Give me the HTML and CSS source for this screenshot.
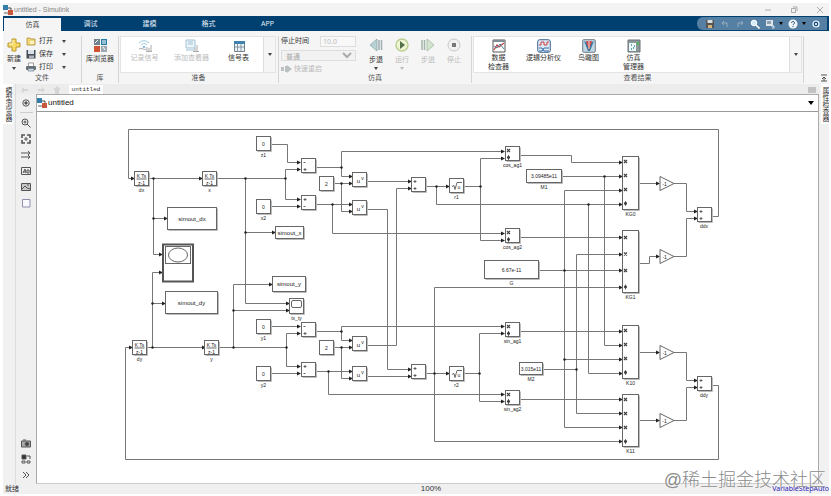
FILE: index.html
```html
<!DOCTYPE html>
<html lang="zh-CN">
<head>
<meta charset="utf-8">
<title>untitled - Simulink</title>
<link rel="stylesheet" href="styles.css">
</head>
<body>
<svg class="defs" aria-hidden="true">
  <symbol id="model" viewBox="0 0 10 10"><path d="M5 3h3v4" fill="none" stroke="#444"/><rect x="0" y="0" width="5" height="5" fill="#347fa9"/><rect x="5" y="5" width="5" height="5" fill="#c9573b"/><path d="M1 8h4" stroke="#666"/></symbol>
</svg>
<div class="app">
  <header class="titlebar">
    <svg class="ic10"><use href="#model"/></svg>
    <span class="title">untitled - Simulink</span>
    <div class="winbtns">
      <button aria-label="最小化"><svg viewBox="0 0 8 8"><path d="M1 4h6"/></svg></button>
      <button aria-label="还原"><svg viewBox="0 0 8 8"><path d="M1.500 2.500h4v4h-4zM3 1h4v4"/></svg></button>
      <button aria-label="关闭"><svg viewBox="0 0 8 8"><path d="M1 1l6 6M7 1l-6 6"/></svg></button>
    </div>
  </header>

  <nav class="tabs">
    <button class="tab active">仿真</button>
    <button class="tab">调试</button>
    <button class="tab">建模</button>
    <button class="tab">格式</button>
    <button class="tab">APP</button>
    <div class="quick">
      <button aria-label="保存"><svg viewBox="0 0 10 10"><path d="M1 1h8v8H1z" fill="#555"/><path d="M2.500 1h5v3h-5z" fill="#d8dde0"/><path d="M3 6h4v3H3z" fill="#d4b47c"/></svg></button>
      <button aria-label="撤销"><svg viewBox="0 0 10 10"><path d="M4 2L2 4l2 2M2 4h5v4" fill="none" stroke="#94adc1"/></svg></button>
      <button aria-label="重做"><svg viewBox="0 0 10 10"><path d="M6 2l2 2-2 2M8 4H3v4" fill="none" stroke="#94adc1"/></svg></button>
      <button aria-label="搜索"><svg viewBox="0 0 10 10"><circle cx="4" cy="4" r="2.800" fill="#d5ecf8" stroke="#fff"/><path d="M6 6l3.500 3.500" stroke="#fff" stroke-width="1.600"/></svg></button>
      <button class="drop" aria-label="收藏"><svg viewBox="0 0 10 10"><path d="M1 1h7v6H1z" fill="#dde3e8"/><path d="M3 2v3M5 2v3" stroke="#46607a"/><path d="M6 7h3v2H7" fill="none" stroke="#dde3e8"/></svg><i></i></button>
      <button class="drop" aria-label="帮助"><svg viewBox="0 0 10 10"><circle cx="5" cy="5" r="4.500" fill="#f2f6f9"/><path d="M3.500 4c0-2 3-2 3 0 0 1-1.500 1-1.500 2M5 7v1" fill="none" stroke="#164a78"/></svg><i></i></button>
      <button aria-label="选项"><svg viewBox="0 0 10 10"><circle cx="5" cy="5" r="3" fill="#1b578c" stroke="#fff" stroke-width="1.200"/><circle cx="5" cy="5" r="1" fill="#fff"/></svg></button>
    </div>
  </nav>

  <section class="ribbon">
    <div class="group g-file">
      <div class="body">
        <button class="big"><svg viewBox="0 0 16 16"><path d="M6 2h4v4h4v4h-4v4H6v-4H2V6h4z" fill="#f8d964" stroke="#b9962e"/><path d="M7 3v4H3" fill="none" stroke="#fff6c8"/></svg><span>新建</span><i></i></button>
        <div class="rows">
          <button><svg viewBox="0 0 10 10"><path d="M1 9V2h3l1 1h4v6z" fill="#f5d675" stroke="#ac8f3f" stroke-width=".8"/><path d="M4 5h4v3H4z" fill="#fff4c3"/></svg><span>打开</span><i></i></button>
          <button><svg viewBox="0 0 10 10"><path d="M.5 1h9v8.500h-9z" fill="#454d56"/><path d="M2 1h6v4H2z" fill="#d9e2e9"/><path d="M3 6.500h5V9H3z" fill="#aeb5bc"/></svg><span>保存</span><i></i></button>
          <button><svg viewBox="0 0 10 10"><path d="M2.500 4V1h5v3" fill="#fff" stroke="#777" stroke-width=".7"/><rect y="4" width="10" height="4" rx="1" fill="#66717c"/><path d="M2 6.500h6V9H2z" fill="#c4def0" stroke="#666" stroke-width=".6"/></svg><span>打印</span><i></i></button>
        </div>
      </div>
      <h2>文件</h2>
    </div>
    <div class="group g-lib">
      <div class="body">
        <button class="big"><svg viewBox="0 0 14 14"><rect x="1" y="1" width="6" height="6" fill="#70818c"/><rect x="8" y="1" width="6" height="6" fill="#277ca6"/><rect x="1" y="8" width="6" height="6" fill="#cf5334"/><rect x="8" y="8" width="6" height="6" fill="#9aa9b4"/><path d="M2 5l3-3M9 3h4M9 5h4M10 9l2 3" stroke="#fff"/></svg><span>库浏览器</span></button>
      </div>
      <h2>库</h2>
    </div>
    <div class="group g-prep">
      <div class="body gallery">
        <button class="big" disabled><svg viewBox="0 0 14 14"><path d="M1 4c3-3 7-3 10 0M3 6c2-2 4-2 6 0" fill="none" stroke="#9ec9df"/><circle cx="6" cy="8" r="1.300" fill="#8fc1db"/><path d="M1 10c3-2 5 2 7 0M9 12V8M11 12V9M13 12V6M8 12.500h6" fill="none" stroke="#aaa"/></svg><span>记录信号</span></button>
        <button class="big" disabled><svg viewBox="0 0 14 14"><path d="M1 1h9v8H1z" fill="#eef6fa" stroke="#9ec1d6"/><path d="M3 3h5M3 5h5M1 11h8" stroke="#9ec1d6"/><path d="M10 12V9M12 12V6M8 12.500h6" stroke="#aaa"/></svg><span>添加查看器</span></button>
        <button class="big"><svg viewBox="0 0 14 14"><path d="M2.500 2.500h10v10h-10z" fill="#eaf3f8" stroke="#73838e"/><path d="M2 2h11v3H2z" fill="#4282ae"/><path d="M2 8h10M5.500 5v7M9 5v7" stroke="#73838e" stroke-width=".8"/></svg><span>信号表</span></button>
        <button class="more" aria-label="更多准备工具"><i></i></button>
      </div>
      <h2>准备</h2>
    </div>
    <div class="group g-sim">
      <div class="body">
        <div class="fields">
          <div class="field"><label for="stop">停止时间</label><input id="stop" value="10.0" disabled></div>
          <select aria-label="仿真模式" disabled><option>普通</option></select>
          <button class="restart" disabled><svg viewBox="0 0 12 10"><path d="M0 3h3v4H0zM4 2h2v6H4zM6 1l5 4-5 4z" fill="#bbc0c3"/></svg><span>快速重启</span></button>
        </div>
        <button class="big"><svg viewBox="0 0 14 14"><path d="M8 1v12L1 7z" fill="#b8d1d4" stroke="#8ea9ac" stroke-width=".8"/><path d="M10 2v10M12.500 2v10" stroke="#9eaeb2" stroke-width="1.500"/></svg><span>步退</span><i></i></button>
        <button class="big" disabled><svg viewBox="0 0 14 14"><circle cx="7" cy="7" r="6" fill="#eef5d2" stroke="#b9cd91" stroke-width="1.400"/><path d="M5 3l5 4-5 4z" fill="#55704d"/></svg><span>运行</span><i></i></button>
        <button class="big" disabled><svg viewBox="0 0 14 14"><path d="M1 2v10M3.500 2v10" stroke="#a3b4aa" stroke-width="1.500"/><path d="M6 1v12l7-6z" fill="#d4e6cf" stroke="#a1b99d" stroke-width=".8"/></svg><span>步进</span></button>
        <button class="big" disabled><svg viewBox="0 0 14 14"><circle cx="7" cy="7" r="6" fill="#f1f1f1" stroke="#c8c8c8"/><path d="M5 5h4v4H5z" fill="#777"/></svg><span>停止</span></button>
      </div>
      <h2>仿真</h2>
    </div>
    <div class="group g-view">
      <div class="body gallery">
        <button class="big"><svg viewBox="0 0 14 14"><path d="M1 1h12v12H1z" fill="#fff" stroke="#555"/><path d="M1 2h12" stroke="#7e8c95" stroke-width="2"/><path d="M2 11l3-5 2 2 5-4" fill="none" stroke="#c03c48" stroke-width="1.200"/><path d="M2 7l3 2 3-4 4 5" fill="none" stroke="#528198"/></svg><span>数据<br>检查器</span></button>
        <button class="big"><svg viewBox="0 0 14 14"><rect x=".7" y=".7" width="12.600" height="12.600" rx="2" fill="#dce9f4" stroke="#44668d"/><path d="M2 6h2V3h3v3h3V3h2" fill="none" stroke="#cf3d43"/><path d="M2 9h3l2 3h5M2 12h3l2-3h5" fill="none" stroke="#386eab"/></svg><span>逻辑分析仪</span></button>
        <button class="big"><svg viewBox="0 0 14 14"><rect x=".7" y=".7" width="12.600" height="12.600" rx="1" fill="#c2d7e4" stroke="#6e7b85"/><path d="M2 2l4 10h2l4-10-4 2v5L6 4z" fill="#3e759f"/><path d="M4 2h6L7 11z" fill="#d74d4c"/><path d="M7 2v8" stroke="#f5d2cc"/></svg><span>鸟瞰图</span></button>
        <button class="big"><svg viewBox="0 0 14 14"><path d="M1 1h12v12H1z" fill="#8b9996" stroke="#69727a"/><path d="M2 4h7v8H2z" fill="#edf9f9"/><path d="M4 6h1M7 7h1M4 10h1M6 9h1" stroke="#338c9b" stroke-width="1.500"/><path d="M11 3v3" stroke="#52b35a" stroke-width="2"/></svg><span>仿真<br>管理器</span></button>
        <button class="more" aria-label="更多结果工具"><i></i></button>
      </div>
      <h2>查看结果</h2>
    </div>
    <button class="pin" aria-label="折叠工具条"><svg viewBox="0 0 8 8"><path d="M1 1h6M4 3v4M2 5l2-2 2 2M1 7h6" fill="none" stroke="#555"/></svg></button>
  </section>

  <main class="work">
    <aside class="side left"><button>模型浏览器</button></aside>
    <div class="editor">
      <div class="doctabs">
        <button aria-label="后退"><svg viewBox="0 0 8 8"><path d="M0 4l3-3v2h4v2H3v2z"/></svg></button>
        <button aria-label="前进"><svg viewBox="0 0 8 8"><path d="M8 4L5 1v2H1v2h4v2z"/></svg></button>
        <button aria-label="向上"><svg viewBox="0 0 8 8"><path d="M4 0l4 4H6v4H2V4H0z"/></svg></button>
        <button class="doc">untitled</button>
        <button class="kbd" aria-label="布局"><svg viewBox="0 0 8 5"><path d="M0 .5h8M0 2.500h8M0 4.500h8" stroke="#999"/></svg></button>
      </div>
      <div class="lower">
        <div class="palette">
          <button aria-label="隐藏浏览器"><svg viewBox="0 0 10 10"><circle cx="5" cy="5" r="3.200"/><circle cx="5" cy="5" r="1.200" fill="#444"/></svg></button>
          <hr>
          <button aria-label="缩放"><svg viewBox="0 0 10 10"><circle cx="4" cy="4" r="3"/><path d="M6 6l3.500 3.500M2.500 4h3M4 2.500v3"/></svg></button>
          <button aria-label="适应窗口"><svg viewBox="0 0 10 10"><path d="M1 4V1h3M6 1h3v3M9 6v3H6M4 9H1V6" stroke-width="1.600"/><path d="M4 4h2v2H4z"/></svg></button>
          <button aria-label="信号线"><svg viewBox="0 0 10 10"><path d="M0 3h9M7 1l2 2-2 2M0 7h9M7 5l2 2-2 2"/></svg></button>
          <button aria-label="注释"><svg viewBox="0 0 10 10"><path d="M.5 1.500h9v7h-9zM2 7l2-4 1 4M2.500 6H5M6 4h2v3H6z"/></svg></button>
          <button aria-label="图像"><svg viewBox="0 0 10 10"><path d="M.5 1.500h9v7h-9z" fill="#c9c9c9"/><path d="M1 7l3-3 2 2 3 1M6 3h2"/></svg></button>
          <button aria-label="区域"><svg viewBox="0 0 10 10"><path d="M1.500 1.500h7.500v7.500h-7.500z" fill="#f8f8ff" stroke="#8f8fac"/></svg></button>
          <span class="fill"></span>
          <button aria-label="截图"><svg viewBox="0 0 10 10"><path d="M.5 3h9v6h-9zM2 2h3" fill="#aaa"/><circle cx="6" cy="6" r="1.800" fill="#444"/></svg></button>
          <button aria-label="模型数据"><svg viewBox="0 0 10 10"><path d="M1 1h4v4H1z" fill="#333"/><path d="M6 2h3v3M1 7h3v2H1zM6 7h3v2H6z"/></svg></button>
          <button aria-label="更多"><svg viewBox="0 0 10 10"><path d="M2 2l3 3-3 3M5 2l3 3-3 3"/></svg></button>
        </div>
        <div class="page">
          <div class="path">
            <svg class="ic10"><use href="#model"/></svg><span>untitled</span>
            <button aria-label="路径历史"><i></i></button>
          </div>
          <div class="canvas"><svg id="diagram" class="diagram" width="780" height="372" viewBox="37 112 780 372" role="img" aria-label="untitled 模型"></svg></div>
        </div>
      </div>
    </div>
    <aside class="side right"><button>属性检查器</button></aside>
  </main>

  <footer class="status"><span>就绪</span><span class="zoom">100%</span><a href="#solver">VariableStepAuto</a></footer>
  <div class="mark">@稀土掘金技术社区</div>
</div>
<script src="diagram.js"></script>
</body>
</html>
```

FILE: styles.css
```css
* { box-sizing: border-box; }
body { margin: 0; background: #fff; color: #333; font: 7px/10px "Noto Sans", "Noto Sans CJK SC", sans-serif; }
button { margin: 0; padding: 0; border: 0; background: none; color: inherit; font: inherit; }
h2 { margin: 0; font: inherit; text-align: center; color: #555; }
svg { display: block; }
i { display: block; width: 0; height: 0; border: 2px solid transparent; border-top: 3px solid #444; border-bottom: 0; }
.defs { position: absolute; width: 0; height: 0; }
.ic10 { width: 10px; height: 10px; }
.app { position: relative; display: flex; flex-direction: column; height: 100vh; padding: 3px 2px 2px 3px; }

.titlebar { display: flex; align-items: center; gap: 1px; height: 13px; background: #f3f3f3; color: #888; font-family: "Liberation Sans", sans-serif; }
.winbtns { display: flex; gap: 18px; margin-left: auto; padding-right: 5px; }
.winbtns svg { width: 8px; height: 8px; fill: none; stroke: #999; stroke-width: .8; }

.tabs { display: flex; height: 15px; background: #004071; color: #e4edf5; }
.tab { width: 59px; padding-top: 1px; }
.tab.active { width: 57px; margin: 2px 0 0 1px; padding: 0; background: #f5f5f5; color: #444; }
.quick { display: flex; align-items: center; gap: 5px; margin: 1px 2px 1px auto; padding: 0 6px 0 8px; background: #5680a3; border-radius: 6px 0 0 6px; }
.quick svg { width: 10px; height: 10px; }
.drop { display: flex; align-items: center; gap: 4px; }
.drop i { border-top-color: #000; }

.ribbon { display: flex; height: 53px; padding-top: 5px; background: #f5f5f5; }
.group { display: flex; flex-direction: column; justify-content: space-between; border-right: 1px solid #d5d5d5; margin-bottom: 1px; }
.body { display: flex; height: 37px; }
.big { display: flex; flex-direction: column; align-items: center; gap: 2px; padding-top: 2px; line-height: 9px; white-space: nowrap; }
.big svg { width: 14px; height: 14px; }
button:disabled { color: #bbb; }
button:disabled i { border-top-color: #bbb; }
.g-file { width: 79px; }
.g-file .big { width: 22px; padding-top: 1px; gap: 1px; }
.g-file .big svg { width: 16px; height: 16px; }
.g-file .big i { margin-top: 3px; }
.rows { display: flex; flex-direction: column; gap: 3px; padding-left: 1px; }
.rows button { display: flex; align-items: center; gap: 3px; height: 10px; }
.rows svg { width: 10px; height: 10px; }
.rows i { margin-left: 6px; }
.g-lib { width: 37px; }
.g-lib .body { justify-content: center; }
.g-prep { width: 160px; }
.gallery { background: #fff; border: 1px solid #e4e4e4; }
.gallery .big { gap: 0; }
.g-prep .gallery { margin: 0 2px 0 1px; }
.g-prep .big { width: 47px; }
.more { display: grid; place-items: center; width: 12px; margin-left: auto; background: #f5f5f5; border-left: 1px solid #ddd; }
.g-sim { width: 193px; }
.g-sim .big { width: 26px; gap: 3px; }
.fields { display: flex; flex-direction: column; gap: 3px; width: 76px; margin: 0 6px 0 2px; }
.field { display: flex; justify-content: space-between; padding-right: 1px; }
.field input { width: 36px; height: 11px; padding: 0 2px; border: 1px solid #ddd; background: #f8f8f8; color: #bbb; font: inherit; }
.fields select { width: 75px; height: 11px; padding: 0; border: 1px solid #ddd; background: #f2f2f2; color: #aaa; font: inherit; opacity: 1; }
.restart { display: flex; align-items: center; gap: 1px; }
.restart svg { width: 12px; height: 10px; }
.g-view { flex: 1; }
.g-view .gallery { margin: 0 1px; padding-left: 2px; }
.g-view .big { width: 45px; }
.pin { display: flex; width: 25px; align-items: flex-end; justify-content: flex-end; padding: 0 1px 2px 0; }
.pin svg { width: 8px; height: 8px; }

.work { display: flex; flex: 1; min-height: 0; background: #f0f0f0; }
.side { display: flex; align-items: flex-start; background: #f1f1f1; font-size: 7px; line-height: 8px; }
.side button { writing-mode: vertical-rl; height: 40px; background: #fff; text-align: center; white-space: nowrap; overflow: hidden; }
.left { width: 13px; border-right: 1px solid #ddd; }
.left button { width: 10px; }
.right { width: 10px; justify-content: flex-end; }
.right button { width: 8px; }
.editor { display: flex; flex: 1; flex-direction: column; min-width: 0; }
.doctabs { display: flex; gap: 8px; height: 10px; padding: 1px 3px 0 5px; background: #ececec; }
.doctabs svg { width: 8px; height: 8px; fill: #d5d5d5; }
.doctabs .doc { width: 34px; height: 9px; background: #fff; font: 6px/9px "Liberation Mono", monospace; }
.doctabs .kbd { margin-left: auto; }
.doctabs .kbd svg { height: 6px; }
.lower { display: flex; flex: 1; min-height: 0; }
.palette { display: flex; flex-direction: column; align-items: center; gap: 6px; width: 20px; padding: 4px 0; }
.palette svg { width: 10px; height: 10px; fill: none; stroke: #555; }
.palette hr { width: 13px; margin: -2px 0 -1px; border: 0; border-top: 1px solid #ccc; }
.palette .fill { flex: 1; }
.page { display: flex; flex: 1; flex-direction: column; min-width: 0; border: 1px solid #aaa; border-bottom-color: #ccc; background: #fff; }
.path { display: flex; align-items: center; gap: 1px; height: 17px; padding: 0 4px 0 0; border-bottom: 1px solid #999; font: 8px/10px "Liberation Sans", sans-serif; color: #111; }
.path button { margin-left: auto; }
.path i { border-width: 4px 3px 0; border-top-color: #000; }
.canvas { flex: 1; min-height: 0; overflow: hidden; }

.status { display: grid; grid-template-columns: 1fr auto 1fr; height: 10px; padding-left: 30px; background: #f0f0f0; }
.status span:first-child { margin-left: -28px; }
.status .zoom { font: 8px/10px "Liberation Sans", sans-serif; }
.status a { color: #2a22b8; text-align: right; text-decoration: none; white-space: nowrap; }
.mark { position: absolute; right: 5px; bottom: 5px; color: #8c8c8c; font: 300 18px/22px "Liberation Sans", "Noto Sans CJK SC", sans-serif; text-shadow: 0 0 1px #fff; }

.diagram .wire { fill: none; stroke: #777; stroke-width: 1; }
.diagram .block { fill: #fff; stroke: #666; stroke-width: 1; }
.diagram .shade { fill: none; stroke: #bbb; }
.diagram .dark { fill: #222; }
.diagram .glyph { fill: none; stroke: #444; stroke-width: .8; }
.diagram text { font-family: "Liberation Sans", sans-serif; text-anchor: middle; fill: #222; }
.t5 { font-size: 5px; }
.t6 { font-size: 6px; }
```

FILE: diagram.js
```js
const NS = 'http://www.w3.org/2000/svg';
const root = document.getElementById('diagram');

function add(tag, cls, attrs, text) {
  const el = document.createElementNS(NS, tag);
  el.setAttribute('class', cls);
  for (const key in attrs) el.setAttribute(key, attrs[key]);
  if (text !== undefined) el.textContent = text;
  root.appendChild(el);
}
const label = (x, y, text, cls = 't5') => add('text', cls, { x, y }, text);

// Signal lines; each ends in an arrow head.
const arrows = [
  'M711 216.5H718.5V129.5H128.5V178.5H134', 'M149 178.5H202', 'M153.5 178.5V254.5H162', 'M153.5 218.5H167',
  'M217 178.5H285.5V169.500H300', 'M285.5 178.5V199.500H300', 'M271 144.500H287.500V162.500H300', 'M271 206.500H300',
  'M245.5 178.5V303.500H289', 'M245.5 232.500H275', 'M315 167.500H341.500V176.500H352', 'M341.500 167.500V151.500H504',
  'M334 183.500H352', 'M341.500 183.500V211.500H352', 'M315 204.500H352', 'M332.500 204.500V233.500H504',
  'M367 181.500H411', 'M367 209.500H387.500V369.500H411', 'M367 345.500H396.500V188.500H411', 'M426 186.500H449',
  'M436.500 186.500V204.500H622', 'M463 186.500H480.500V158.500H504', 'M480.500 186.500V240.500H504',
  'M520 155.500H571.500V162.500H622', 'M562 176.500H622', 'M604.500 176.500V345.500H622', 'M520 237.500H622',
  'M539 270.500H622', 'M564.500 270.500V190.500H622', 'M564.500 270.500V427.500H622', 'M564.500 359.500H622',
  'M543 369.500H576.500V254.500H622', 'M576.500 369.500V413.500H622', 'M588.500 204.500V373.500H622',
  'M639 183.500H659', 'M639 263.500H649.500V256.500H659', 'M639 352.500H659', 'M639 420.500H659',
  'M674 183.500H686.500V211.500H697', 'M674 256.500H686.500V218.500H697', 'M674 352.500H686.500V380.500H697', 'M674 420.500H686.500V387.500H697',
  'M711 385.500H718.500V459.500H125.500V347.500H132', 'M147 347.500H205', 'M152.500 347.500V272.500H162', 'M152.500 303.500H165',
  'M219 347.500H286.500V333.500H300', 'M286.500 347.500V366.500H300', 'M233.500 347.500V284.500H272', 'M233.500 310.500H289',
  'M271 326.500H300', 'M271 373.500H300', 'M315 331.500H341.500V340.500H352', 'M341.500 331.500V326.500H504',
  'M334 347.500H352', 'M341.500 347.500V378.500H352', 'M315 371.500H352', 'M328.500 371.500V394.500H504',
  'M367 376.500H411', 'M426 373.500H449', 'M434.500 373.500V287.500H622', 'M434.500 373.500V441.500H622',
  'M463 373.500H479.500V333.500H504', 'M479.500 373.500V401.500H504', 'M520 331.500H622', 'M520 399.500H622'
];
for (const d of arrows) {
  add('path', 'wire', { d });
  const x = +d.match(/H([\d.]+)$/)[1];
  const y = +[...d.matchAll(/(?:V|M[\d.]+ )([\d.]+)/g)].pop()[1];
  add('path', 'dark', { d: `M${x - 3} ${y - 2}L${x + 1} ${y}L${x - 3} ${y + 2}Z` });
}
const joints = [
  [153.5, 178.5], [153.5, 218.5], [245.5, 178.5], [245.5, 232.5], [285.5, 178.5], [341.5, 167.5], [341.5, 183.5],
  [332.5, 204.5], [436.5, 186.5], [480.5, 186.5], [588.5, 204.5], [604.5, 176.5], [564.5, 270.5], [564.5, 359.5],
  [576.5, 369.5], [152.5, 347.5], [152.5, 303.5], [233.5, 347.5], [233.5, 310.5], [286.5, 347.5], [341.5, 331.5],
  [341.5, 347.5], [328.5, 371.5], [434.5, 373.5], [479.5, 373.5]
];
for (const [cx, cy] of joints) add('circle', 'dark', { cx, cy, r: 1.2 });

function box(x, y, width, height) {
  add('path', 'shade', { d: `M${x + 1} ${y + height + 1}H${x + width + 1}V${y + 1}` });
  add('rect', 'block', { x, y, width, height });
}
function ports(x, y, step, signs) {
  [...signs].forEach((s, i) => {
    const py = y + step * i;
    if (s === 'x') add('path', 'glyph', { d: `M${x - 1} ${py - 1.5}l3 3m0-3l-3 3`, style: 'stroke-width:1.2' });
    else if (s === '/') {
      add('circle', 'dark', { cx: x + .5, cy: py, r: 1.4 });
      add('path', 'glyph', { d: `M${x + .5} ${py - 2.5}v5` });
    } else add('path', 'glyph', { d: s === '+' ? `M${x - 1} ${py}h3m-1.5-1.5v3` : `M${x - 1} ${py}h2` });
  });
}

// Discrete integrators
for (const [x, y, name] of [[134.5, 171.5, 'dx'], [202.5, 171.5, 'x'], [132.5, 340.5, 'dy'], [204.5, 340.5, 'y']]) {
  box(x, y, 14, 14);
  label(x + 7, y + 6, 'K Ts');
  add('path', 'glyph', { d: `M${x + 2} ${y + 7.5}h10` });
  label(x + 7, y + 13, 'z-1');
  label(x + 7, y + 20, name);
}
// Constants
for (const [x, y, w, h, value, name] of [
  [256.5, 136.5, 14, 14, '0', 'z1'], [256.5, 199.5, 14, 14, '0', 'x2'], [319.5, 176.5, 14, 14, '2', ''],
  [256.5, 319.5, 14, 14, '0', 'y1'], [256.5, 366.5, 14, 14, '0', 'y2'], [319.5, 340.5, 14, 14, '2', ''],
  [526.5, 169.5, 35, 13, '3.09485e11', 'M1'], [484.5, 260.5, 54, 18, '6.67e-11', 'G'], [519.5, 362.5, 23, 12, '3.015e11', 'M2']
]) {
  box(x, y, w, h);
  label(x + w / 2, y + h / 2 + 2, value);
  if (name) label(x + w / 2, y + h + 6, name);
}
// Workspace sinks
for (const [x, y, w, h, name] of [
  [167.5, 207.5, 49, 22, 'simout_dx'], [275.5, 226.5, 28, 12, 'simout_x'],
  [165.5, 291.5, 52, 22, 'simout_dy'], [272.5, 276.5, 33, 15, 'simout_y']
]) {
  box(x, y, w, h);
  label(x + w / 2, y + h / 2 + 2, name, 't6');
}
// Sums
for (const [x, y, signs] of [
  [301.5, 158.5, '-+'], [301.5, 195.5, '+-'], [411.5, 177.5, '++'], [697.5, 207.5, '++'],
  [301.5, 322.5, '-+'], [301.5, 362.5, '+-'], [411.5, 364.5, '++'], [697.5, 376.5, '++']
]) {
  box(x, y, 14, 14);
  ports(x + 3, y + 4, 7, signs);
}
label(704, 228, 'ddx');
label(704, 397, 'ddy');
// Powers
for (const y of [172.5, 200.5, 336.5, 366.5]) {
  box(352.5, y, 14, 14);
  label(358.5, y + 10, 'u', 't6');
  label(362.5, y + 7, 'v');
}
// Square roots
for (const [y, name] of [[178.5, 'r1'], [366.5, 'r2']]) {
  box(449.5, y, 14, 14);
  add('path', 'glyph', { d: `M452 ${y + 8}l2-1 1 4 2-7h5` });
  label(459, y + 10, 'u');
  label(456.5, y + 20, name);
}
// Two-port products
for (const [y, name] of [[146.5, 'cos_ag1'], [228.5, 'cos_ag2'], [322.5, 'sin_ag1'], [390.5, 'sin_ag2']]) {
  box(505.5, y, 14, 14);
  ports(508, y + 4, 7, 'x/');
  label(512.5, y + 20, name);
}
// Four-port products
for (const [y, h, step, name] of [[156.5, 53, 14, 'KG0'], [230.5, 62, 16.5, 'KG1'], [325.5, 53, 14, 'K10'], [394.5, 52, 14, 'K11']]) {
  box(622.5, y, 16, h);
  ports(625, y + (h > 60 ? 7 : 5), step, 'xxx/');
  label(630.5, y + h + 6, name);
}
// Gains
for (const y of [183.5, 256.5, 352.5, 420.5]) {
  add('path', 'block', { d: `M660 ${y - 7}L674 ${y}L660 ${y + 7}Z` });
  label(664.5, y + 2, '-1');
}
// Scopes
add('rect', 'block', { x: 163, y: 244.5, width: 30, height: 37, style: 'stroke-width:2;stroke:#555' });
add('rect', 'block', { x: 165.5, y: 246.5, width: 25, height: 17 });
add('ellipse', 'block', { cx: 178, cy: 255, rx: 9.5, ry: 7 });
box(289.5, 298.5, 14, 15);
add('rect', 'block', { x: 291.5, y: 300.5, width: 10, height: 7, rx: 1.5 });
label(296.5, 320, 'tx_ty');
```
